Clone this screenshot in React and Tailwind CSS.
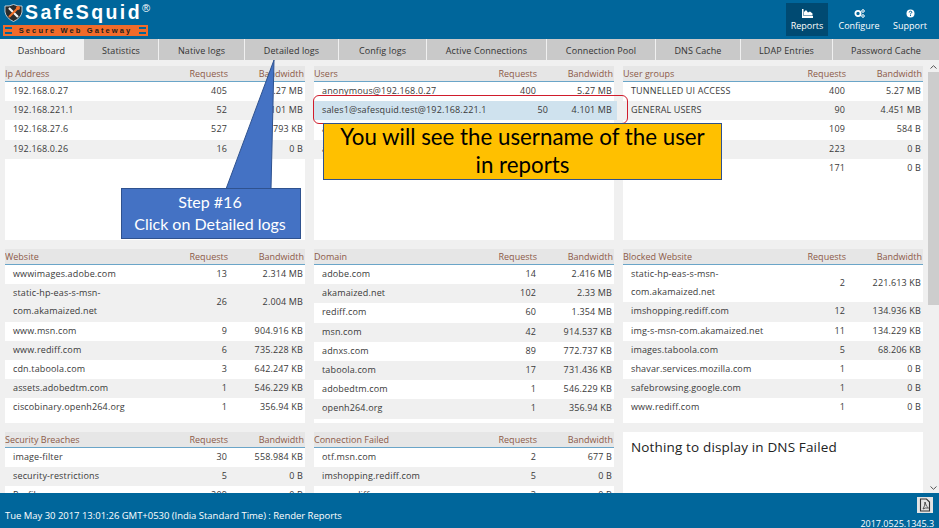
import React from "react";

const ui = "font-['Open_Sans',sans-serif]";

const tabs = [
  ["Dashboard", "w-[83px]"],
  ["Statistics", "w-[74px]"],
  ["Native logs", "w-[85px]"],
  ["Detailed logs", "w-[93px]"],
  ["Config logs", "w-[87px]"],
  ["Active Connections", "w-[119px]"],
  ["Connection Pool", "w-[108px]"],
  ["DNS Cache", "w-[84px]"],
  ["LDAP Entries", "w-[91px]"],
  ["Password Cache", "flex-1"],
];

const panels = [
  [
    ["Ip Address", [["192.168.0.27", "405", "5.27 MB"], ["192.168.221.1", "52", "4.101 MB"], ["192.168.27.6", "527", "793 KB"], ["192.168.0.26", "16", "0 B"]]],
    ["Users", [["anonymous@192.168.0.27", "400", "5.27 MB"], ["sales1@safesquid.test@192.168.221.1", "50", "4.101 MB", "sel"], ["anonymous@192.168.27.6", "527", "793 KB"], ["anonymous@192.168.0.26", "16", "0 B"]]],
    ["User groups", [["TUNNELLED UI ACCESS", "400", "5.27 MB"], ["GENERAL USERS", "90", "4.451 MB"], ["BYPASS", "109", "584 B"], ["DEFAULT", "223", "0 B"], ["ADMIN", "171", "0 B"]]],
  ],
  [
    ["Website", [["wwwimages.adobe.com", "13", "2.314 MB"], ["static-hp-eas-s-msn-com.akamaized.net", "26", "2.004 MB"], ["www.msn.com", "9", "904.916 KB"], ["www.rediff.com", "6", "735.228 KB"], ["cdn.taboola.com", "3", "642.247 KB"], ["assets.adobedtm.com", "1", "546.229 KB"], ["ciscobinary.openh264.org", "1", "356.94 KB"]]],
    ["Domain", [["adobe.com", "14", "2.416 MB"], ["akamaized.net", "102", "2.33 MB"], ["rediff.com", "60", "1.354 MB"], ["msn.com", "42", "914.537 KB"], ["adnxs.com", "89", "772.737 KB"], ["taboola.com", "17", "731.436 KB"], ["adobedtm.com", "1", "546.229 KB"], ["openh264.org", "1", "356.94 KB"]]],
    ["Blocked Website", [["static-hp-eas-s-msn-com.akamaized.net", "2", "221.613 KB"], ["imshopping.rediff.com", "12", "134.936 KB"], ["img-s-msn-com.akamaized.net", "11", "134.229 KB"], ["images.taboola.com", "5", "68.206 KB"], ["shavar.services.mozilla.com", "1", "0 B"], ["safebrowsing.google.com", "1", "0 B"], ["www.rediff.com", "1", "0 B"]]],
  ],
  [
    ["Security Breaches", [["image-filter", "30", "558.984 KB"], ["security-restrictions", "5", "0 B"], ["Profiles", "209", "0 B"]]],
    ["Connection Failed", [["otf.msn.com", "2", "677 B"], ["imshopping.rediff.com", "5", "0 B"], ["www.rediff.com", "3", "0 B"]]],
    null,
  ],
];

function Panel({ data }) {
  if (!data) {
    return (
      <div className="h-[174px] w-[300px] bg-white px-2 pt-[5px] text-[13.5px] tracking-[0.15px] text-[#222]">
        Nothing to display in DNS Failed
      </div>
    );
  }
  const [title, rows] = data;
  return (
    <div className="h-[174px] w-[300px] bg-white">
      <div className="flex h-[16px] items-center border-b border-[#6aa5c8] bg-[#e6e6e6] text-[9px] leading-none text-[#8c5a48]">
        <div className="flex-1">{title}</div>
        <div className="w-[60px] pr-[1px] text-right">Requests</div>
        <div className="w-[76px] pr-[1px] text-right">Bandwidth</div>
      </div>
      {rows.map(([n, r, b, sel], i) => (
        <div
          key={n}
          className={`flex items-center pb-[1px] text-[9px] leading-[18.2px] tracking-[0.15px] text-[#3a3a3a] ${sel ? "w-[303px] bg-[#cfe2ee]" : i % 2 ? "bg-[#f0f0f0]" : "bg-white"}`}
        >
          <div className={`flex-1 pl-2 ${sel ? "whitespace-nowrap" : "pr-2"}`}>{n}</div>
          <div className={`text-right ${sel ? "w-[30px] pr-[5px]" : "w-[60px] pr-[2px]"}`}>{r}</div>
          <div className={`text-right ${sel ? "w-[64px] pr-[5px]" : "w-[76px] pr-[2px]"}`}>{b}</div>
        </div>
      ))}
    </div>
  );
}

function Logo() {
  return (
    <div className="relative h-[39px] w-[160px] shrink-0">
      <svg className="absolute left-[4px] top-[4px]" width="19" height="18" viewBox="0 0 19 18">
        <path d="M1 2 Q5 2.5 9.5 0.5 Q14 2.5 18 2 L18 8 Q17 14 9.5 17.5 Q2 14 1 8 Z" fill="#2b2b2b" stroke="#e8e8e8" strokeWidth="0.8" />
        <path d="M5 4 L14 13" stroke="#f4f4f4" strokeWidth="2.2" />
        <path d="M14 4 L5 13" stroke="#f0702a" strokeWidth="2.2" />
        <circle cx="14" cy="4" r="2" fill="#f0702a" />
      </svg>
      <div className="absolute left-[25px] top-0 font-['Liberation_Sans',sans-serif] text-[19.5px] font-bold leading-[24px] tracking-[2.4px] text-white">
        SafeSquid
        <span className="relative -top-[7px] text-[11px] font-normal tracking-normal">®</span>
      </div>
      <div className="absolute left-[3px] top-[25px] flex h-[11px] w-[145px] items-center bg-[#f26b2a] px-[2px]">
        <div className="flex h-[7px] w-[7px] flex-col justify-between"><span className="h-[2px] bg-[#00669b]"></span><span className="h-[2px] bg-[#00669b]"></span></div>
        <div className="flex-1 whitespace-nowrap text-center font-['Liberation_Sans',sans-serif] text-[7.5px] font-bold leading-[11px] tracking-[2.1px] text-[#1e1e1e]">Secure Web Gateway</div>
        <div className="flex h-[7px] w-[7px] flex-col justify-between"><span className="h-[2px] bg-[#00669b]"></span><span className="h-[2px] bg-[#00669b]"></span></div>
      </div>
    </div>
  );
}

function NavItem({ label, active, w, children }) {
  return (
    <div className={`flex h-[33px] ${w} flex-col items-center justify-center text-[9px] leading-[12px] text-white ${active ? "bg-[#004a72]" : ""}`}>
      <div className="flex h-[12px] items-center">{children}</div>
      <div>{label}</div>
    </div>
  );
}

export default function App() {
  return (
    <div className={`${ui} relative flex h-[528px] w-[939px] flex-col overflow-hidden bg-[#f0f0f0]`}>
      <header className="flex h-[39px] shrink-0 items-start justify-between bg-[#00669b]">
        <Logo />
        <div className="mr-[9px] mt-[3px] flex gap-[8px]">
          <NavItem label="Reports" active w="w-[42px]">
            <svg width="11" height="9" viewBox="0 0 11 9"><path d="M0 0h1.5v7H11v2H0z M2 6.5 V3 L4 1 L6 3.5 L8 2.5 L10.5 4.5 V6.5 Z" fill="#fff" /></svg>
          </NavItem>
          <NavItem label="Configure" w="w-[46px]">
            <svg width="11" height="9" viewBox="0 0 11 9"><circle cx="4" cy="4.5" r="2.6" fill="none" stroke="#fff" strokeWidth="1.8" /><circle cx="9" cy="2" r="1.3" fill="none" stroke="#fff" /><circle cx="9" cy="7" r="1.3" fill="none" stroke="#fff" /></svg>
          </NavItem>
          <NavItem label="Support" w="w-[40px]">
            <svg width="9" height="9" viewBox="0 0 9 9"><circle cx="4.5" cy="4.5" r="4" fill="#fff" /><path d="M3.2 3.5 Q3.3 2.2 4.5 2.2 Q5.8 2.2 5.8 3.4 Q5.8 4.1 4.5 4.7 V5.4" fill="none" stroke="#00669b" strokeWidth="1" /><rect x="4" y="6" width="1" height="1" fill="#00669b" /></svg>
          </NavItem>
        </div>
      </header>

      <nav className="flex h-[21px] shrink-0 gap-px bg-[#f0f0f0]">
        {tabs.map(([t, w], i) => (
          <div key={t} className={`flex ${w} items-center justify-center pt-[2px] text-[9px] tracking-[0.1px] text-[#333] ${i === 0 ? "bg-[#f0f0f0]" : "bg-[#c9c9c9]"}`}>
            {t}
          </div>
        ))}
      </nav>

      <div className="flex min-h-0 flex-1 overflow-hidden">
        <main className="flex w-[928px] flex-col gap-[9px] overflow-hidden pl-[5px] pt-[6px]">
          {panels.map((row, ri) => (
            <div key={ri} className="flex h-[174px] shrink-0 gap-[9px] overflow-hidden">
              {row.map((p, i) => (
                <Panel key={i} data={p} />
              ))}
            </div>
          ))}
        </main>
        <aside className="flex w-[11px] flex-col items-center">
          <svg className="mt-[5px] shrink-0" width="7" height="4" viewBox="0 0 7 4"><path d="M0.5 3.5 L3.5 0.7 L6.5 3.5" fill="none" stroke="#555" strokeWidth="1" /></svg>
          <div className="mt-[3px] h-[233px] w-full shrink-0 bg-[#cdcdcd]"></div>
          <svg className="mb-[3px] mt-auto shrink-0" width="7" height="4" viewBox="0 0 7 4"><path d="M0.5 0.5 L3.5 3.3 L6.5 0.5" fill="none" stroke="#555" strokeWidth="1" /></svg>
        </aside>
      </div>

      <footer className="flex h-[35px] shrink-0 items-start justify-between bg-[#00669b] pl-[5px] pr-[5px] pt-[4px] text-[9.5px] leading-[10px] tracking-[-0.03px] text-white">
        <div className="mt-[14px]">Tue May 30 2017 13:01:26 GMT+0530 (India Standard Time) : Render Reports</div>
        <div className="flex flex-col items-end">
          <div className="mb-[6px] mr-[1px] flex h-[16px] w-[16px] items-center justify-center bg-[#e4e4e4]">
            <svg width="12" height="14" viewBox="0 0 12 14"><path d="M1.5 1h6l3 3v9h-9z" fill="none" stroke="#333" strokeWidth="1.1" /><path d="M4 11 Q6 8 6 4 Q7 9 9.5 10 Q6 9.5 4 11z" fill="none" stroke="#333" strokeWidth="0.8" /></svg>
          </div>
          <div className="text-[9px]">2017.0525.1345.3</div>
        </div>
      </footer>

      {/* step callout */}
      <svg className="absolute left-[205px] top-[59px]" width="80" height="131" viewBox="0 0 80 131">
        <path d="M69 1 L21 130 L66 130 Z" fill="#4472c4" />
        <path d="M21 130 L69 1 L66 130" fill="none" stroke="#2f528f" strokeWidth="1" />
      </svg>
      <div className="absolute left-[121px] top-[188px] flex h-[51px] w-[180px] flex-col items-center justify-center border border-[#2f528f] bg-[#4472c4] pb-[2px] pr-[2px] font-['Lato',sans-serif] text-[16px] leading-[21.5px] text-white">
        <div>Step #16</div>
        <div>Click on Detailed logs</div>
      </div>

      {/* username highlight */}
      <div className="absolute left-[313px] top-[95px] h-[29px] w-[315px] rounded-[6px] border border-[#d01c2c]"></div>
      <div className="absolute left-[323px] top-[123px] flex h-[57px] w-[399px] items-center justify-center border border-[#2f528f] bg-[#ffc000] pb-[2px] text-center font-['Lato',sans-serif] text-[22.3px] leading-[28px] text-black">
        <div>You will see the username of the user<br />in reports</div>
      </div>
    </div>
  );
}
